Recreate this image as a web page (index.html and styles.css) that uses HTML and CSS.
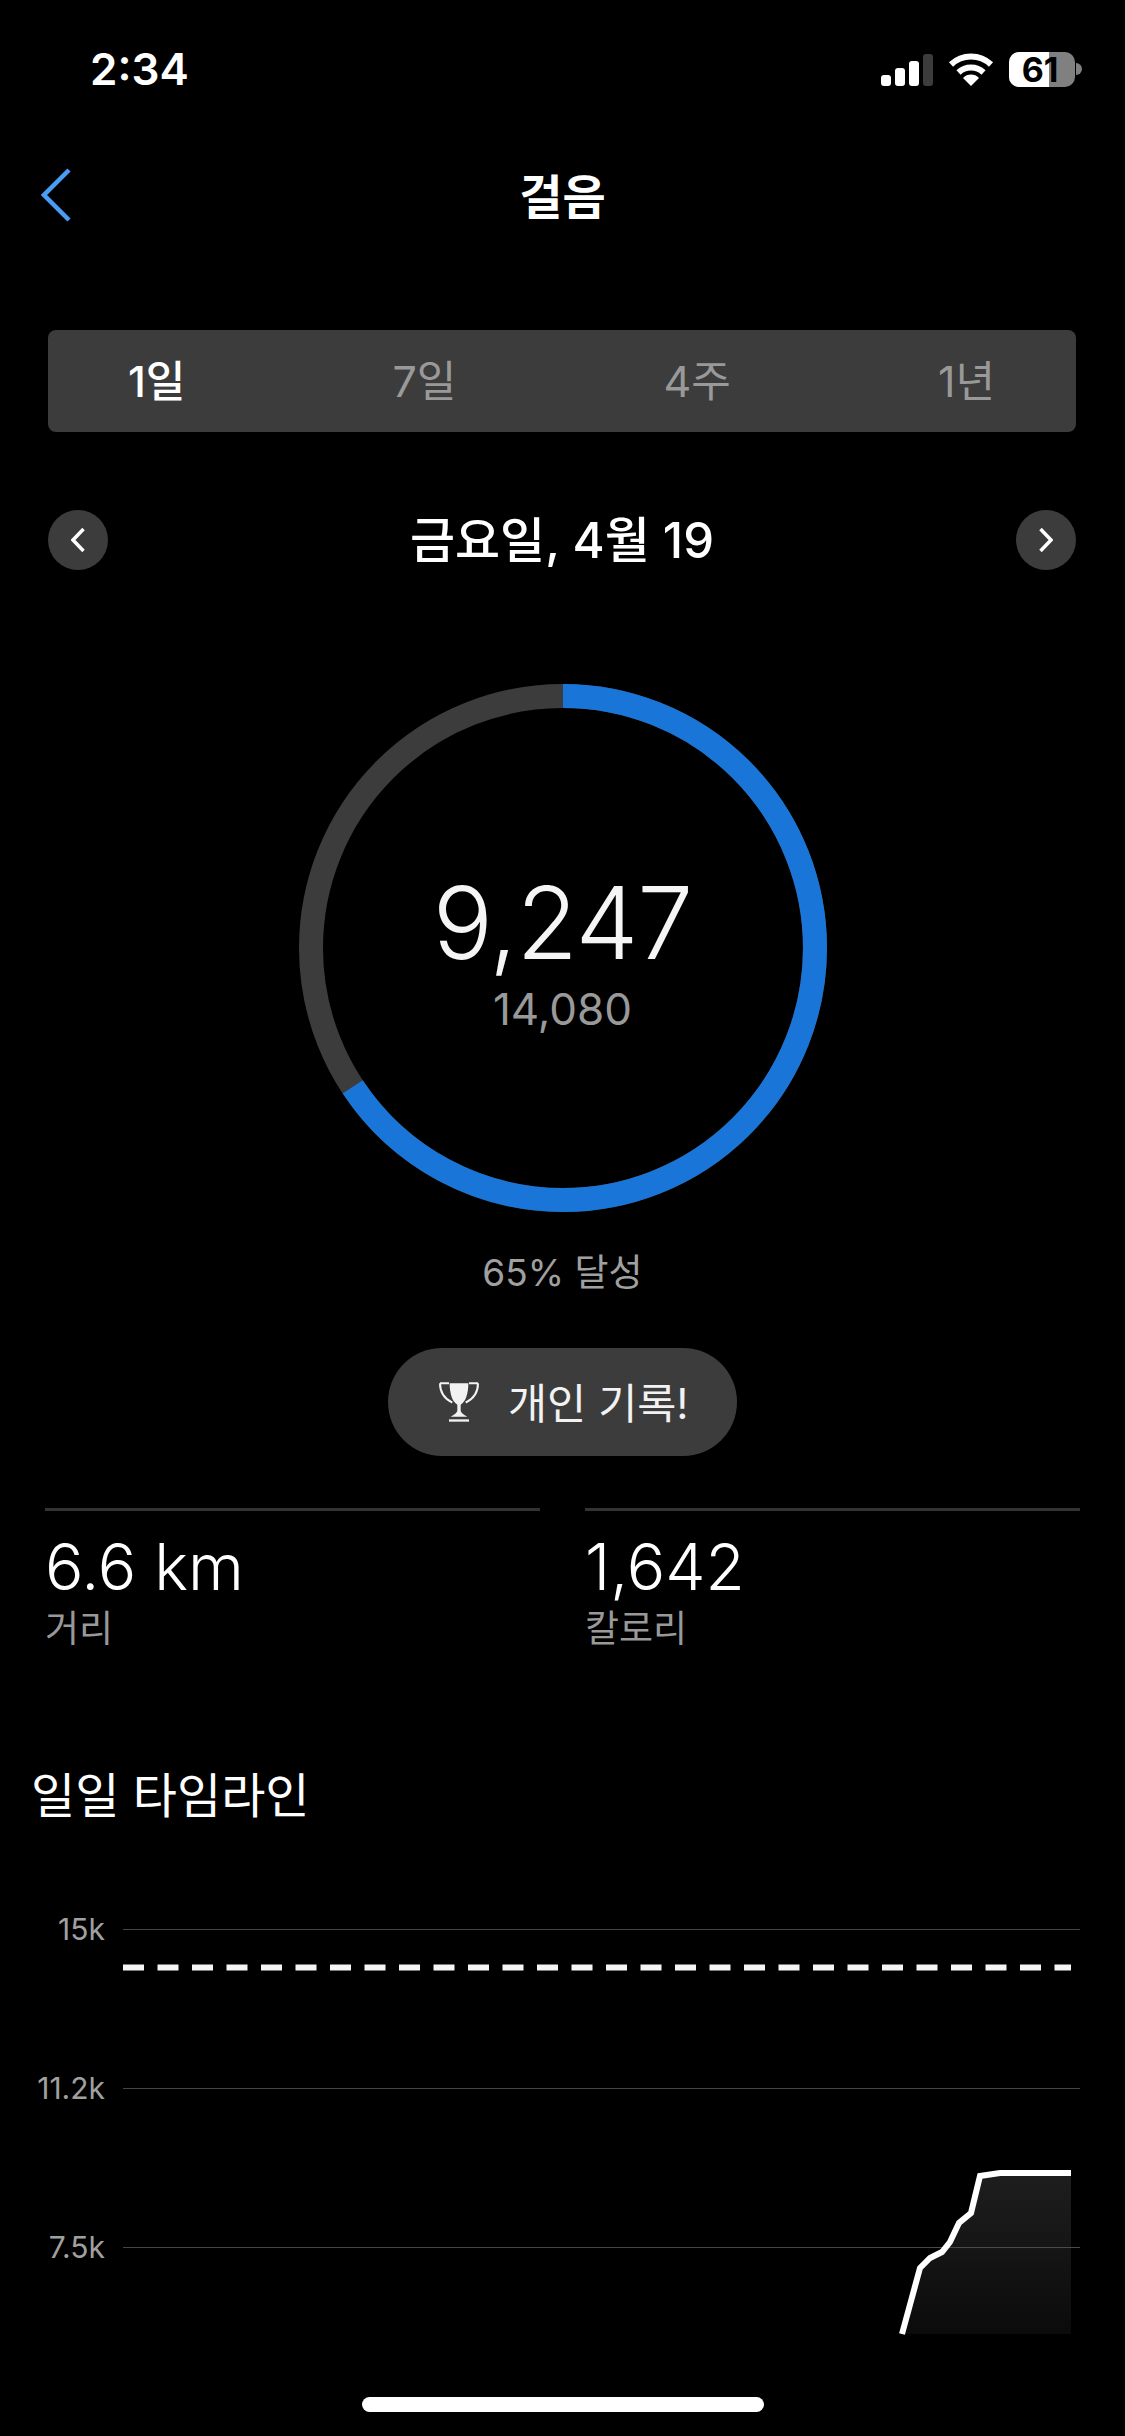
FILE: index.html
```html
<!DOCTYPE html>
<html lang="ko">
<head>
    <meta charset="UTF-8" />
    <title>걸음</title>
    <link rel="stylesheet" href="styles.css">
</head>
<body>
<div class="status-bar">
    <span class="time">2:34</span>
    <div class="status-icons">
        <div class="signal">
            <span class="bar bar-1"></span>
            <span class="bar bar-2"></span>
            <span class="bar bar-3"></span>
            <span class="bar bar-4"></span>
        </div>
        <svg class="wifi" width="46" height="33" viewBox="0 0 46 33">
            <path d="M3 11.5A29 29 0 0 1 43 11.5" fill="none" stroke="#fff" stroke-width="6"/>
            <path d="M10.5 19.5A18 18 0 0 1 35.5 19.5" fill="none" stroke="#fff" stroke-width="6"/>
            <path d="M23 33L15 25A11 11 0 0 1 31 25Z" fill="#fff"/>
        </svg>
        <div class="battery">
            <div class="battery-body">
                <span class="battery-level"></span>
                <span class="battery-text">61</span>
            </div>
            <span class="battery-nub"></span>
        </div>
    </div>
</div>

<div class="nav">
    <svg class="back" width="30" height="54" viewBox="0 0 30 54">
        <path d="M28 2L3 27L28 52" fill="none" stroke="#4a9df5" stroke-width="4.5"/>
    </svg>
    <h1>걸음</h1>
</div>

<div class="tabs">
    <span class="tab active">1일</span>
    <span class="tab">7일</span>
    <span class="tab">4주</span>
    <span class="tab">1년</span>
</div>

<div class="date-row">
    <span class="round-btn">
        <svg width="14" height="24" viewBox="0 0 14 24"><path d="M12.5 1L2 12L12.5 23" fill="none" stroke="#fff" stroke-width="3.5"/></svg>
    </span>
    <span class="date">금요일, 4월 19</span>
    <span class="round-btn">
        <svg width="14" height="24" viewBox="0 0 14 24"><path d="M1.5 1L12 12L1.5 23" fill="none" stroke="#fff" stroke-width="3.5"/></svg>
    </span>
</div>

<div class="ring">
    <svg class="ring-svg" width="528" height="528" viewBox="0 0 528 528">
        <circle cx="264" cy="264" r="252" fill="none" stroke="#3c3c3c" stroke-width="24"/>
        <circle cx="264" cy="264" r="252" fill="none" stroke="#1976d8" stroke-width="24" stroke-dasharray="1040 1583" transform="rotate(-90 264 264)"/>
    </svg>
    <div class="ring-text">
        <div class="steps">9,247</div>
        <div class="goal">14,080</div>
    </div>
</div>

<div class="percent">65% 달성</div>

<div class="pill">
    <svg width="40" height="40" viewBox="0 0 120 120">
        <path d="M3 4H30M3 4C3 30 15 50 40 62M117 4H90M117 4C117 30 105 50 80 62" fill="none" stroke="#f2f2f2" stroke-width="6"/>
        <path d="M32 4H88C88 35 80 60 65 68V85C65 92 75 100 85 104H35C45 100 55 92 55 85V68C40 60 32 35 32 4Z" fill="#f2f2f2"/>
        <rect x="30" y="112" width="60" height="7" fill="#f2f2f2"/>
    </svg>
    <span>개인 기록!</span>
</div>

<div class="stats">
    <div class="stat">
        <div class="stat-value">6.6 km</div>
        <div class="stat-label">거리</div>
    </div>
    <div class="stat">
        <div class="stat-value">1,642</div>
        <div class="stat-label">칼로리</div>
    </div>
</div>

<h2>일일 타임라인</h2>

<div class="chart">
    <div class="chart-row row-15"><span class="tick">15k</span><span class="grid-line"></span></div>
    <div class="chart-row row-11"><span class="tick">11.2k</span><span class="grid-line"></span></div>
    <div class="chart-row row-7"><span class="tick">7.5k</span><span class="grid-line"></span></div>
    <!-- viewBox starts at the chart's top, so y values here are page y -->
    <svg class="plot" width="1125" height="440" viewBox="0 1909 1125 440">
        <defs>
            <linearGradient id="fade" x1="0" y1="0" x2="0" y2="1">
                <stop offset="0" stop-color="#1e1e1e"/>
                <stop offset="1" stop-color="#0b0b0b"/>
            </linearGradient>
        </defs>
        <line x1="123" y1="1967.5" x2="1071" y2="1967.5" stroke="#f5f5f5" stroke-width="6" stroke-dasharray="21 13.5"/>
        <path d="M902 2334L920 2268L930 2258L942 2252L950 2242L959 2223L971 2213L980 2176L1000 2173H1071V2334Z" fill="url(#fade)"/>
        <line x1="930" y1="2247.5" x2="1080" y2="2247.5" stroke="#4a4a4a" stroke-width="1"/>
        <path d="M902 2334L920 2268L930 2258L942 2252L950 2242L959 2223L971 2213L980 2176L1000 2173H1071" fill="none" stroke="#fff" stroke-width="6"/>
    </svg>
</div>

<div class="home-indicator"></div>
</body>
</html>
```
FILE: styles.css
```css
body {
    margin: 0;
    width: 1125px;
    height: 2436px;
    overflow: hidden;
    position: relative;
    background: #000;
    color: #fff;
    font-family: Inter, "Noto Sans CJK KR", sans-serif;
}

.status-bar {
    height: 50px;
    padding: 44px 43px 0 90px;
    display: flex;
    justify-content: space-between;
    align-items: center;
}

.time {
    font-size: 44px;
    font-weight: 600;
    line-height: 50px;
}

.status-icons {
    display: flex;
    align-items: center;
    gap: 15px;
}

.signal {
    display: flex;
    align-items: flex-end;
    gap: 4px;
    height: 33px;
}

.bar {
    width: 10px;
    background: #fff;
    border-radius: 3px;
}

.bar-1 { height: 11px; }
.bar-2 { height: 18px; }
.bar-3 { height: 25px; }
.bar-4 { height: 32px; background: #3c3c3c; }

.battery {
    display: flex;
    align-items: center;
    gap: 1px;
}

.battery-body {
    width: 66px;
    height: 35px;
    border-radius: 10px;
    background: #808080;
    display: grid;
    place-items: center;
}

.battery-level {
    grid-area: 1 / 1;
    justify-self: start;
    width: 40px;
    height: 35px;
    border-radius: 10px 0 0 10px;
    background: #fff;
}

.battery-text {
    grid-area: 1 / 1;
    color: #000;
    font-size: 34px;
    font-weight: 700;
    line-height: 35px;
    position: relative;
    right: 2px;
}

.battery-nub {
    width: 6px;
    height: 12px;
    background: #808080;
    border-radius: 0 6px 6px 0;
}

.nav {
    margin-top: 68px;
    height: 70px;
    padding-left: 41px;
    display: grid;
    grid-template-columns: 1fr;
    align-items: center;
}

.back {
    grid-area: 1 / 1;
    margin-bottom: 4px;
}

h1 {
    grid-area: 1 / 1;
    margin: 0 41px 0 0;
    text-align: center;
    font-size: 47px;
    font-weight: 700;
    line-height: 70px;
}

.tabs {
    margin: 98px 49px 0 48px;
    height: 102px;
    background: #3c3c3c;
    border-radius: 8px;
    display: flex;
    justify-content: space-between;
    align-items: center;
    padding: 0 81px 0 80px;
}

.tab {
    font-size: 43px;
    color: #999;
    line-height: 60px;
}

.tab.active {
    color: #fff;
    font-weight: 500;
}

.date-row {
    margin: 78px 49px 0 48px;
    height: 60px;
    display: flex;
    justify-content: space-between;
    align-items: center;
}

.round-btn {
    width: 60px;
    height: 60px;
    border-radius: 50%;
    background: #3c3c3c;
    display: flex;
    justify-content: center;
    align-items: center;
}

.date {
    font-size: 49px;
    font-weight: 500;
    line-height: 60px;
    padding-top: 2px;
}

.ring {
    margin: 114px auto 0;
    width: 528px;
    height: 528px;
    display: grid;
    place-items: center;
}

.ring-svg,
.ring-text {
    grid-area: 1 / 1;
}

.ring-text {
    text-align: center;
    padding-top: 6px;
}

.steps {
    font-size: 100px;
    font-weight: 300;
    letter-spacing: -1px;
    line-height: 110px;
    color: #f5f5f5;
}

.goal {
    font-size: 44px;
    color: #999;
    line-height: 50px;
    margin-top: 6px;
}

.percent {
    margin-top: 36px;
    text-align: center;
    font-size: 37px;
    color: #a0a0a0;
    line-height: 50px;
}

.pill {
    margin: 50px auto 0;
    width: 349px;
    height: 108px;
    box-sizing: border-box;
    padding-left: 51px;
    border-radius: 54px;
    background: #3c3c3c;
    display: flex;
    align-items: center;
    gap: 29px;
    font-size: 42.5px;
    color: #f2f2f2;
}

.pill span {
    padding-bottom: 3px;
}

.stats {
    margin: 52px 45px 0;
    display: flex;
    gap: 45px;
}

.stat {
    flex: 1;
    border-top: 3px solid #333;
    padding-top: 18px;
}

.stat-value {
    font-size: 64px;
    font-weight: 300;
    line-height: 76px;
}

.stat-label {
    font-size: 37px;
    color: #999;
    line-height: 44px;
    margin-top: 2px;
}

h2 {
    margin: 115px 0 0 31px;
    font-size: 48px;
    font-weight: 400;
    line-height: 60px;
}

.chart {
    margin-top: 83px;
    position: relative;
}

.chart-row {
    display: flex;
    align-items: center;
    gap: 18px;
    height: 40px;
    padding-right: 45px;
}

.row-11 { margin-top: 119px; }
.row-7 { margin-top: 119px; }

.tick {
    width: 105px;
    text-align: right;
    font-size: 30px;
    color: #a0a0a0;
    line-height: 40px;
}

.grid-line {
    flex: 1;
    height: 1px;
    background: #444;
}

.plot {
    position: absolute;
    left: 0;
    top: 0;
}

.home-indicator {
    position: absolute;
    left: 362px;
    top: 2397px;
    width: 402px;
    height: 15px;
    border-radius: 8px;
    background: #fff;
}
```
